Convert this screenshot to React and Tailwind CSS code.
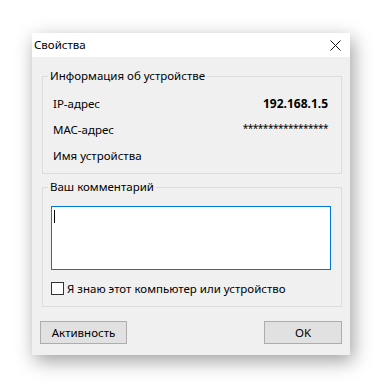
export default function App() {
  const font = { fontFamily: '"Noto Sans", "Open Sans", sans-serif' };
  return (
    <div className="w-[382px] h-[388px] bg-white pt-[33px] pl-[32px] overflow-hidden" style={font}>
      <div className="w-[318px] h-[322px] bg-[#f0f0f0] flex flex-col shadow-[3px_6px_18px_rgba(0,0,0,0.38)] text-[11.5px] text-black leading-[16px]">
        <div className="h-[24px] bg-white flex items-center justify-between pl-[2px] pr-[9px] shrink-0">
          <span>Свойства</span>
          <svg width="11" height="11" viewBox="0 0 11 11" className="mt-[1px]">
            <path d="M0.5 0.5 L10.5 10.5 M10.5 0.5 L0.5 10.5" stroke="#111" strokeWidth="1" fill="none" />
          </svg>
        </div>

        <fieldset className="mt-[11px] ml-[10px] w-[300px] border border-[#dcdcdc] pl-[10px] pr-[13px] pt-[7px] pb-[4px] min-w-0">
          <legend className="-ml-[5px] px-[2px] leading-[16px]">Информация об устройстве</legend>
          <div className="h-[26px] flex items-center justify-between">
            <span>IP-адрес</span>
            <span className="font-bold text-[12px]">192.168.1.5</span>
          </div>
          <div className="h-[26px] flex items-center justify-between">
            <span>MAC-адрес</span>
            <span className="text-[10px] -translate-y-[2px] tracking-[-0.5px]">*****************</span>
          </div>
          <div className="h-[26px] flex items-center">
            <span>Имя устройства</span>
          </div>
        </fieldset>

        <fieldset className="mt-[5px] ml-[10px] w-[300px] border border-[#dcdcdc] pl-[8px] pr-[10px] pt-[11px] pb-[11px] min-w-0">
          <legend className="-ml-[3px] px-[2px] leading-[16px]">Ваш комментарий</legend>
          <div className="w-[280px] h-[64px] bg-white border border-[#0078d7] relative">
            <div className="absolute left-[2px] top-[3px] w-[1px] h-[13px] bg-black"></div>
          </div>
          <div className="mt-[12px] flex items-center h-[13px]">
            <div className="w-[13px] h-[13px] border border-[#333] bg-white shrink-0"></div>
            <span className="ml-[3px]">Я знаю этот компьютер или устройство</span>
          </div>
        </fieldset>

        <div className="mt-[14px] flex justify-between pl-[8px] pr-[8px]">
          <div className="w-[87px] h-[23px] bg-[#e1e1e1] border border-[#adadad] flex items-center justify-center">
            Активность
          </div>
          <div className="w-[78px] h-[23px] bg-[#e1e1e1] border border-[#adadad] flex items-center justify-center">
            OK
          </div>
        </div>
      </div>
    </div>
  );
}
